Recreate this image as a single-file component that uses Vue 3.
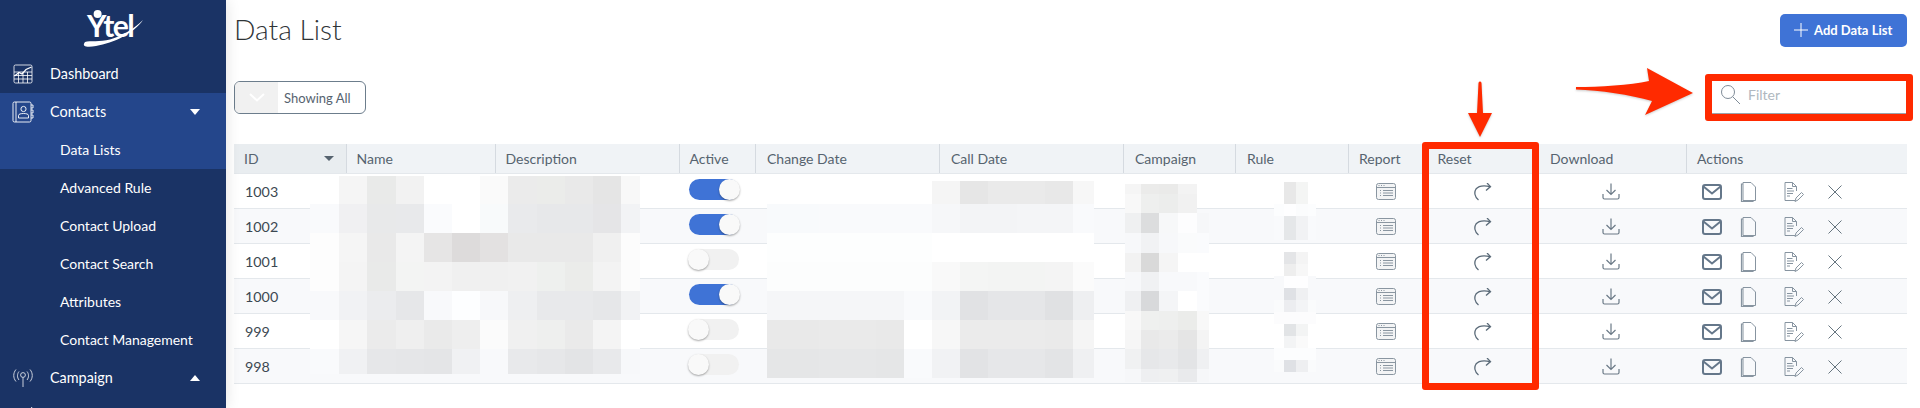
<script setup>
const subMenu = ['Advanced Rule', 'Contact Upload', 'Contact Search', 'Attributes', 'Contact Management']

const columns = [
  { label: 'ID', sorted: true },
  { label: 'Name' },
  { label: 'Description' },
  { label: 'Active' },
  { label: 'Change Date' },
  { label: 'Call Date' },
  { label: 'Campaign' },
  { label: 'Rule' },
  { label: 'Report' },
  { label: 'Reset' },
  { label: 'Download' },
  { label: 'Actions' }
]

const rows = [
  { id: 1003, active: true },
  { id: 1002, active: true },
  { id: 1001, active: false },
  { id: 1000, active: true },
  { id: 999, active: false },
  { id: 998, active: false }
]

// blurred-out table content, page coordinates
const blocks = [
  {
    left: 310, top: 176,
    cols: [29, 28, 28.7, 28, 28.3, 28, 28, 28.7, 28.3, 28, 28, 19],
    rows: [28, 29, 29.3, 29, 29, 29, 24.7],
    cells: [
      [0, 'f5f5f5', 'e9eae9', 'f2f2f2', 'fff', 'fff', 'fafafa', 'ebebeb', 'ebecea', 'e9e9e9', 'e5e5e5', 'f8f8f8'],
      ['f9fafc', 'f0f0f2', 'e8e9ea', 'e8e9eb', 'fafbfd', 'fff', 'f8fafb', 'e9eaec', 'e7e8ea', 'e7e8ea', 'e5e5e7', 'f2f3f5'],
      ['fdfdfd', 'f5f5f5', 'e9e9e9', 'f4f4f4', 'e6e5e5', 'dddbdb', 'e3e1e1', 'e9e9e9', 'e9e9e9', 'e9e9e9', 'f0f0f0', 'fcfcfc'],
      ['fdfdfd', 'f4f4f4', 'e9eae9', 'f3f4f3', 'f3f3f3', 'f0f0f0', 'f0f0f0', 'f1f1f1', 'eef0ee', 'ebecea', 'f3f3f3', 'fcfcfc'],
      ['f8f9fb', 'f1f2f4', 'ebecee', 'e6e7e9', 'f8f9fb', 'fdfeff', 'f7f8fa', 'eeeff1', 'e8e9eb', 'e8e9eb', 'e6e7e9', 'f1f2f4'],
      ['fff', 'f6f6f6', 'ebebeb', 'efefef', 'eaeaea', 'eeeeee', 'fbfbfb', 'f0f0f0', 'eeefee', 'eaeaea', 'f4f4f4', 'fff'],
      ['f9fafc', 'f0f1f3', 'e6e7e9', 'e5e6e8', 'e4e5e7', 'f0f1f3', 'f8f9fb', 'e8e9eb', 'e6e7e9', 'e3e4e6', 'e8e9eb', 'f7f8fa']
    ]
  },
  {
    left: 767, top: 181,
    cols: [23, 29, 28.3, 28.4, 28, 28.3, 28, 28, 28.7, 28, 28.3, 21],
    rows: [23, 29, 29.3, 29, 29, 29, 28.7],
    cells: [
      ['fff', 'fff', 'fff', 'fff', 'fff', 'fff', 'f5f5f5', 'e6e6e6', 'eaeaea', 'eaeaea', 'e8e8e8', 'f7f7f7'],
      ['f8fafc', 'f8fafc', 'f9fafc', 'f9fafc', 'f9fafc', 'f9fafc', 'f6f7f9', 'f3f4f6', 'f3f4f6', 'f4f5f7', 'f4f5f7', 'f9fafc'],
      ['fdfefe', 'fdfefe', 'fdfefe', 'fdfefe', 'fdfefe', 'fdfefe', 'fff', 'fff', 'fff', 'fff', 'fff', 'fff'],
      ['fcfdfd', 'fcfdfd', 'fcfdfd', 'fcfdfd', 'fcfdfd', 'fcfdfd', 'f9f9f9', 'f4f5f4', 'f3f4f3', 'f3f4f3', 'f4f4f4', 'fbfbfb'],
      ['f5f6f8', 'f5f6f8', 'f5f6f8', 'f5f6f8', 'f5f6f8', 'f9fafc', 'f2f3f5', 'e1e2e4', 'e5e6e8', 'e5e6e8', 'e0e1e3', 'eeeff1'],
      ['e9e9e9', 'e9e9e9', 'eaeaea', 'eaeaea', 'e9e9e9', 'fff', 'f7f7f7', 'ebebeb', 'ebebeb', 'ebebeb', 'eaeaea', 'f5f5f5'],
      ['e5e6e7', 'e5e6e7', 'e6e7e8', 'e6e7e8', 'e5e6e7', 'f9fafc', 'f1f2f4', 'e2e3e5', 'e6e7e9', 'e6e7e9', 'e3e4e6', 'eff0f2']
    ]
  },
  {
    left: 1125, top: 184,
    cols: [15.7, 18.6, 19, 19, 11.7],
    rows: [10.3, 19, 19.7, 19.7, 19.3, 19.3, 19.7, 19, 19.3, 19.4, 13],
    cells: [
      ['f5f5f5', 'ebebea', 'eaeae9', 'f3f3f3', 0],
      ['f8f8f8', 'eeefee', 'ecedec', 'f1f1f1', 0],
      ['eff0f1', 'dcddde', 'f7f8f9', 'fdfdfe', 'f6f7f9'],
      ['f7f8fa', 'f1f2f4', 'f7f8fa', 'fafbfc', 'fafbfd'],
      ['f2f2f2', 'd9d9d9', 'f5f5f5', 'fff', 'fff'],
      ['f7f8fa', 'f0f1f3', 'f8f9fb', 'f8f9fb', 'fafbfd'],
      ['eff0f2', 'd8d9db', 'f4f5f7', 'fff', 'fafbfd'],
      ['f8f8f8', 'eff0ef', 'eeefee', 'ebecea', 'f8f8f8'],
      ['f6f6f6', 'e9e9e9', 'ebebeb', 'e5e5e5', 'f4f4f4'],
      ['f0f1f2', 'e6e7e9', 'e8e9eb', 'e3e4e6', 'eff0f2'],
      ['f6f7f9', 'eeeff1', 'eff0f1', 'e9eaec', 'f6f7f9']
    ]
  },
  {
    left: 1274, top: 182,
    cols: [10, 12, 11.7, 8.3],
    rows: [22, 12, 24, 12, 12, 12, 12, 12, 12, 12, 12, 12, 12, 12],
    cells: [
      [0, 'e8e8e8', 'f4f5f4', 0],
      ['fcfdfe', 'fefeff', 'fbfcfd', 'fcfdfe'],
      ['f9fafc', 'e5e7e9', 'f1f2f4', 'f9fafc'],
      [0, 0, 0, 0],
      [0, 'e4e5e7', 'f4f4f4', 0],
      [0, 'eeeeee', 'f7f7f7', 0],
      ['f8f9fb', 'fefeff', 'fefeff', 'f8f9fb'],
      ['f8f9fb', 'dfe1e5', 'eff0f2', 'f8f9fb'],
      ['fafbfc', 'ecedf0', 'f3f4f6', 'fafbfc'],
      ['fcfcfd', 'fcfcfd', 'fcfcfd', 'fcfcfd'],
      [0, 'e2e4e6', 'f3f4f4', 0],
      [0, 'f3f4f5', 'fafafa', 0],
      ['fcfdfe', 'fcfdfe', 'fcfdfe', 'fcfdfe'],
      ['fafbfc', 'dfe1e5', 'eeeff1', 'fafbfc']
    ]
  }
]

const blockStyle = (b) => ({
  left: b.left + 'px',
  top: b.top + 'px',
  gridTemplateColumns: b.cols.map((c) => c + 'px').join(' '),
  gridTemplateRows: b.rows.map((r) => r + 'px').join(' ')
})
const cellColor = (c) => (c ? { background: '#' + c } : null)
</script>

<template>
  <div class="page">
    <aside class="sidebar">
      <div class="logo">
        <svg class="logo-mark" width="62" height="40" viewBox="0 0 62 40">
          <circle cx="15.6" cy="5" r="4" fill="#fff" />
          <path d="M3 33C-1 38 6 38.5 14 37C32 34 52 24 61 11C52 20 40 27 28 30.5C18 33 8 31.5 3 33Z" fill="#fff" />
          <text x="5" y="28" class="logo-text">Ytel</text>
        </svg>
      </div>

      <div class="nav-row">
        <svg class="nav-icon" width="20" height="20" viewBox="0 0 20 20" fill="none" stroke="#fff" stroke-width="0.8">
          <rect x="1" y="1" width="18" height="18" rx="1.5" />
          <path d="M1 8H19M1 11.5H19M1 15H19M5.5 8V19M10 8V19M14.5 8V19" />
          <path d="M1.5 12L6 8.5L9 10L13 5.5L18.5 3" stroke-width="1.2" />
        </svg>
        <span>Dashboard</span>
      </div>

      <div class="group-open">
        <div class="nav-row">
          <svg class="nav-icon contacts" width="22" height="22" viewBox="0 0 22 22" fill="none" stroke="#fff" stroke-width="0.9">
            <rect x="1" y="1" width="18" height="20" rx="1.5" />
            <path d="M19 4H21V7H19M19 9H21V12H19M19 14H21V17H19" />
            <path d="M4 1V21" />
            <circle cx="11.5" cy="8" r="2.6" />
            <path d="M6.5 17V14.5C6.5 13 9 12.5 11.5 12.5C14 12.5 16.5 13 16.5 14.5V17Z" />
          </svg>
          <span>Contacts</span>
          <i class="caret down"></i>
        </div>
        <div class="nav-sub">Data Lists</div>
      </div>

      <div v-for="item in subMenu" :key="item" class="nav-sub">{{ item }}</div>

      <div class="nav-row">
        <svg class="nav-icon contacts" width="22" height="20" viewBox="0 0 22 20" fill="none" stroke="#fff" stroke-width="0.9" opacity="0.85">
          <circle cx="11" cy="7" r="2.4" />
          <path d="M11 9.4V19" />
          <path d="M7 3.5C5 6 5 9.5 7 12M15 3.5C17 6 17 9.5 15 12" />
          <path d="M4 1.5C1 5 1 10 4 13.5M18 1.5C21 5 21 10 18 13.5" />
        </svg>
        <span>Campaign</span>
        <i class="caret up"></i>
      </div>
      <div class="nav-peek">
        <svg width="22" height="11" viewBox="0 0 22 11" fill="none" stroke="#fff" stroke-width="0.9">
          <path d="M20 7L18 10" />
        </svg>
      </div>
    </aside>

    <main class="content">
      <div class="top-row">
        <h1>Data List</h1>
        <button class="add-btn">
          <svg width="14" height="14" viewBox="0 0 14 14" stroke="#fff" stroke-width="1"><path d="M7 0V14M0 7H14" /></svg>
          Add Data List
        </button>
      </div>

      <div class="filter-row">
        <div class="showing">
          <span class="showing-arrow">
            <svg width="16" height="9" viewBox="0 0 16 9" fill="none" stroke="#fff" stroke-width="2"><path d="M1 1L8 7.5L15 1" /></svg>
          </span>
          <span class="showing-label">Showing All</span>
        </div>
        <div class="filter">
          <svg width="21" height="21" viewBox="0 0 21 21" fill="none" stroke="#7f8c98" stroke-width="1">
            <circle cx="8" cy="8" r="6.5" />
            <path d="M12.8 12.8L20 20" />
          </svg>
          <span>Filter</span>
        </div>
      </div>

      <div class="table">
        <div class="tr head">
          <div v-for="col in columns" :key="col.label" class="th" :class="{ sorted: col.sorted }">
            {{ col.label }}
            <i v-if="col.sorted" class="sort-caret"></i>
          </div>
        </div>
        <div v-for="row in rows" :key="row.id" class="tr">
          <div class="td id">{{ row.id }}</div>
          <div class="td"></div>
          <div class="td"></div>
          <div class="td">
            <span class="toggle" :class="{ on: row.active }"><span class="knob"></span></span>
          </div>
          <div class="td"></div>
          <div class="td"></div>
          <div class="td"></div>
          <div class="td"></div>
          <div class="td icon report">
            <svg width="20" height="17" viewBox="0 0 20 17" fill="none" stroke="#8a96a1" stroke-width="1">
              <rect x="0.5" y="0.5" width="19" height="16" rx="2" fill="#f3f4f5" />
              <path d="M0.5 4.5H19.5" />
              <path d="M2.5 2.5H3.5M5 2.5H6M7.5 2.5H8.5" />
              <path d="M4 7.5H5M7 7.5H17M4 10H5M7 10H17M4 12.5H5M7 12.5H17" />
            </svg>
          </div>
          <div class="td icon reset">
            <svg width="18" height="18" viewBox="0 0 18 18" fill="none" stroke="#5a6a78" stroke-width="1.3">
              <path d="M4.5 17C0.5 14 0 9 2 6C4.5 2.8 9.5 2.2 16 3.5" />
              <path d="M13 0L16.5 3.6L12 7.5" />
            </svg>
          </div>
          <div class="td icon download">
            <svg width="18" height="17" viewBox="0 0 18 17" fill="none" stroke="#6a7986" stroke-width="1.2">
              <path d="M9 0.5V11.5M4.5 7L9 11.5L13.5 7" />
              <path d="M1 11V14.5C1 15.5 1.5 16 2.5 16H15.5C16.5 16 17 15.5 17 14.5V11" />
            </svg>
          </div>
          <div class="td actions">
            <svg class="a-mail" width="20" height="16" viewBox="0 0 20 16" fill="none" stroke="#65778a" stroke-width="2">
              <rect x="1" y="1" width="18" height="14" rx="2" />
              <path d="M1.5 2.5L10 9.5L18.5 2.5" />
            </svg>
            <svg class="a-doc" width="16" height="20" viewBox="0 0 16 20" fill="none" stroke="#8794a0" stroke-width="1">
              <path d="M3 0.5H11L15.5 5V18.5H3Z" />
              <path d="M3 2H1.5V19.5H13V18.5" stroke-width="1.2" />
            </svg>
            <svg class="a-edit" width="20" height="20" viewBox="0 0 20 20" fill="none" stroke="#8794a0" stroke-width="1">
              <path d="M11 18.5H1V0.5H8.5L12.5 4.5V9" />
              <path d="M8.5 0.5V4.5H12.5" />
              <path d="M3 6.5H8.5M3 9H10M3 11.5H9M3 14H6" />
              <path d="M11 19.5L12 16L17.5 10.5L19.5 12.5L14 18Z" />
            </svg>
            <svg class="a-close" width="14" height="14" viewBox="0 0 14 14" stroke="#66757f" stroke-width="1">
              <path d="M0.5 0.5L13.5 13.5M13.5 0.5L0.5 13.5" />
            </svg>
          </div>
        </div>
      </div>
    </main>

    <!-- pixelated cells over the table -->
    <div v-for="(b, i) in blocks" :key="i" class="mosaic" :style="blockStyle(b)">
      <template v-for="(line, r) in b.cells" :key="r">
        <div v-for="(c, k) in line" :key="k" :style="cellColor(c)"></div>
      </template>
    </div>

    <!-- screenshot annotations -->
    <div class="mark mark-filter"></div>
    <div class="mark mark-reset"></div>
    <svg class="arrow arrow-right" width="130" height="60" viewBox="1570 60 130 60">
      <path d="M1576 87C1600 87 1630 85 1649 81L1647 68L1693 93L1645 115L1652 101C1630 95 1600 90 1576 89.5Z" fill="#ff2a00" />
    </svg>
    <svg class="arrow arrow-down" width="30" height="60" viewBox="1465 80 30 60">
      <path d="M1478.5 83C1479 81 1481 81 1481.5 83L1483 113H1492L1480 137L1468 113H1477Z" fill="#ff2a00" />
    </svg>
  </div>
</template>

<style scoped>
.page {
  position: relative;
  display: flex;
  width: 1920px;
  height: 408px;
  overflow: hidden;
  background: #fff;
  font-family: Lato, "Liberation Sans", sans-serif;
  font-size: 14px;
}

.sidebar {
  flex: 0 0 226px;
  height: 408px;
  overflow: hidden;
  background: #1a3365;
  color: #fff;
  box-shadow: 0 0 14px rgba(0, 0, 0, 0.12);
  z-index: 1;
}

.logo {
  display: flex;
  justify-content: center;
  align-items: flex-start;
  height: 55px;
  padding-top: 9px;
  box-sizing: border-box;
}

.logo-mark {
  overflow: visible;
}

.logo-text {
  font-family: Lato, sans-serif;
  font-weight: 700;
  font-size: 30px;
  letter-spacing: -1.5px;
  fill: #fff;
}

.nav-row {
  position: relative;
  display: flex;
  align-items: center;
  height: 38px;
  padding-left: 13px;
  font-size: 14.4px;
}

.nav-row span {
  margin-top: -2px;
}

.nav-icon {
  flex: 0 0 auto;
  margin-right: 17px;
}

.nav-icon.contacts {
  margin-left: -1px;
  margin-right: 16px;
}

.nav-sub {
  display: flex;
  align-items: center;
  height: 38px;
  padding: 0 0 2px 60px;
  box-sizing: border-box;
  font-size: 14px;
}

.nav-peek {
  padding-left: 12px;
}

.group-open {
  background: #24468b;
}

.caret {
  position: absolute;
  left: 190px;
  width: 0;
  height: 0;
  border-left: 5.5px solid transparent;
  border-right: 5.5px solid transparent;
}

.caret.down {
  border-top: 6px solid #fff;
}

.caret.up {
  border-bottom: 6px solid #fff;
}

.content {
  flex: 1;
  min-width: 0;
  padding: 14px 13px 0 8px;
}

.top-row,
.filter-row {
  display: flex;
  justify-content: space-between;
}

.top-row h1 {
  margin: 0;
  font-size: 28.2px;
  font-weight: 300;
  line-height: 30px;
  color: #2f3437;
}

.add-btn {
  display: flex;
  align-items: center;
  gap: 6px;
  width: 127px;
  height: 33px;
  padding: 0 0 1px 14px;
  border: 0;
  border-radius: 5px;
  background: #3f73d6;
  color: #fff;
  font-family: inherit;
  font-size: 13px;
  font-weight: 700;
}

.filter-row {
  margin-top: 34px;
  height: 33px;
}

.showing {
  display: flex;
  width: 132px;
  box-sizing: border-box;
  border: 1px solid #6c7d8c;
  border-radius: 6px;
  overflow: hidden;
}

.showing-arrow {
  display: flex;
  align-items: center;
  justify-content: center;
  width: 43px;
  background: #f1f1f1;
}

.showing-label {
  align-self: center;
  margin-left: 6px;
  color: #56636f;
  font-size: 13px;
}

.filter {
  display: flex;
  align-items: center;
  gap: 7px;
  width: 195px;
  height: 32px;
  margin-top: 1px;
  padding: 0 0 6px 8px;
  box-sizing: border-box;
  border-right: 1px solid #c9ced3;
  border-bottom: 1px solid #9aa3ab;
  color: #b0b8c0;
  font-size: 14px;
}

.table {
  margin-top: 30px;
  color: #3c4852;
}

.tr {
  display: grid;
  grid-template-columns: 112.5px 149px 184px 76.5px 184px 184px 112px 113px 76px 115px 147px 220px;
  height: 35px;
  box-sizing: border-box;
  border-bottom: 1px solid #e4e8ec;
}

.tr:nth-child(odd) {
  background: #f8f9fb;
}

.tr.head {
  height: 30px;
  background: #f0f3f6;
  color: #56636f;
}

.th {
  position: relative;
  display: flex;
  align-items: center;
  padding: 0 0 1px 10px;
  box-sizing: border-box;
  border-right: 1px solid #d5dae0;
}

.th:nth-child(5),
.th:nth-child(6),
.th:nth-child(7),
.th:nth-child(8) {
  padding-left: 11px;
}

.th:nth-child(10) {
  padding-left: 12.5px;
  border-right: 0;
}

.th:last-child {
  border-right: 0;
}

.th.sorted {
  background: #e9edf0;
}

.sort-caret {
  position: absolute;
  left: 90px;
  top: 12px;
  border-left: 5px solid transparent;
  border-right: 5px solid transparent;
  border-top: 5px solid #56636f;
}

.td {
  display: flex;
  align-items: center;
}

.td.id {
  padding-left: 11px;
  font-size: 14.3px;
}

.toggle {
  display: block;
  position: relative;
  width: 50px;
  height: 21px;
  margin: -3px 0 0 9px;
  border-radius: 11px;
  background: #f1f1f1;
}

.toggle.on {
  background: #3f73d6;
}

.knob {
  position: absolute;
  left: -1px;
  top: 0;
  width: 21px;
  height: 21px;
  border-radius: 50%;
  background: #f9f9f9;
  box-shadow: 0 1px 2px rgba(0, 0, 0, 0.35);
}

.toggle.on .knob {
  left: 30px;
}

.td.icon {
  justify-content: center;
  padding-top: 1px;
  box-sizing: border-box;
}

.td.report {
  padding-right: 3px;
}

.td.reset {
  padding-left: 1px;
}

.td.download {
  padding-right: 5px;
}

.td.actions {
  padding: 1px 0 0 15px;
  box-sizing: border-box;
}

.a-doc {
  margin-left: 18px;
}

.a-edit {
  margin-left: 28px;
}

.a-close {
  margin-left: 24px;
}

.mosaic {
  position: absolute;
  display: grid;
}

.mark {
  position: absolute;
  box-sizing: border-box;
  border: 7px solid #ff2a00;
  border-radius: 3px;
}

.mark-filter {
  left: 1705px;
  top: 74px;
  width: 208px;
  height: 47px;
}

.mark-reset {
  left: 1422px;
  top: 142px;
  width: 117px;
  height: 248px;
}

.arrow {
  position: absolute;
  filter: drop-shadow(0 1px 1px rgba(0, 0, 0, 0.2));
}

.arrow-right {
  left: 1570px;
  top: 60px;
}

.arrow-down {
  left: 1465px;
  top: 80px;
}
</style>

<style>
html,
body {
  margin: 0;
  overflow: hidden;
}
</style>
